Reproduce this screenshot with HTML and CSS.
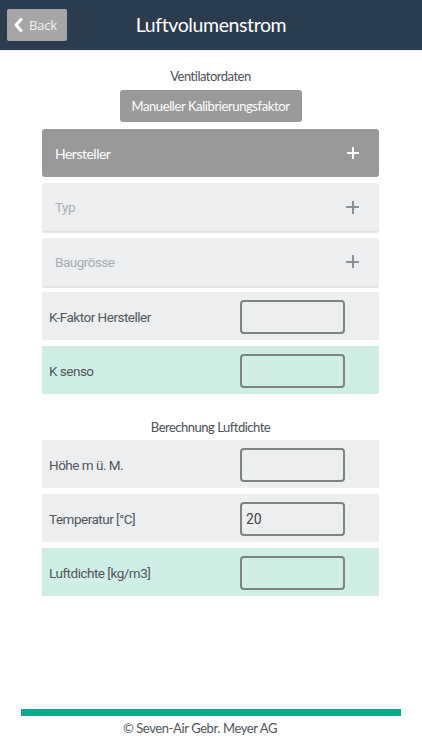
FILE: index.html
```html
<!DOCTYPE html>
<html lang="de">
<head>
<meta charset="utf-8">
<title>Luftvolumenstrom</title>
<link rel="stylesheet" href="styles.css">
</head>
<body>
<div class="page">
  <header class="topbar">
    <button class="back">
      <svg class="chev" width="9" height="14" viewBox="0 0 9 14"><path d="M7 1.5 L2 7 L7 12.5" fill="none" stroke="#ffffff" stroke-width="3" stroke-linecap="round" stroke-linejoin="round"/></svg>
      <span>Back</span>
    </button>
    <h1 class="title">Luftvolumenstrom</h1>
  </header>

  <main class="content">
    <div class="section-title first">Ventilatordaten</div>
    <div class="btn-row"><button class="calib">Manueller Kalibrierungsfaktor</button></div>

    <div class="list">
      <div class="row select active"><span>Hersteller</span><span class="plus"></span></div>
      <div class="row select"><span>Typ</span><span class="plus"></span></div>
      <div class="row select"><span>Baugrösse</span><span class="plus"></span></div>
      <div class="row field"><span>K-Faktor Hersteller</span><div class="input"></div></div>
      <div class="row field result"><span>K senso</span><div class="input"></div></div>
    </div>

    <div class="section-title second">Berechnung Luftdichte</div>
    <div class="list second-list">
      <div class="row field"><span>Höhe m ü. M.</span><div class="input"></div></div>
      <div class="row field"><span>Temperatur [°C]</span><div class="input">20</div></div>
      <div class="row field result"><span>Luftdichte [kg/m3]</span><div class="input"></div></div>
    </div>
  </main>

  <footer class="footer">
    <div class="bar"></div>
    <div class="copy">© Seven-Air Gebr. Meyer AG</div>
  </footer>
</div>
</body>
</html>
```
FILE: styles.css
```css
* { box-sizing: border-box; }
html, body { margin: 0; padding: 0; background: #ffffff; }
body { font-family: Lato, "Open Sans", sans-serif; }
.page { min-height: 750px; display: flex; flex-direction: column; }

.topbar {
  height: 51px;
  background: #2c3c4f;
  border-bottom: 1px solid #e6eef6;
  display: flex;
  align-items: center;
  position: relative;
  padding: 0 7px;
}
.back {
  width: 60px; height: 32px;
  margin-top: -1px;
  background: #a6a6a6;
  border: none;
  border-radius: 2px;
  display: flex; align-items: center;
  padding: 0 0 0 7px;
  gap: 6px;
  color: #f2f2f2;
  font-family: "Open Sans", sans-serif;
  font-size: 13px;
  letter-spacing: -0.2px;
}
.title {
  position: absolute; left: 0; right: 0; top: 0; bottom: 0;
  margin: 0;
  display: flex; align-items: center; justify-content: center;
  font-family: Lato, sans-serif;
  font-weight: 400;
  font-size: 19.5px;
  letter-spacing: -0.4px;
  color: #ffffff;
  pointer-events: none;
  padding-bottom: 2px;
}

.content { padding: 0 43px 0 42px; display: flex; flex-direction: column; }
.section-title {
  text-align: center;
  font-size: 13px;
  font-weight: 400;
  letter-spacing: -0.5px;
  color: #4a5057;
  line-height: 16px;
}
.section-title.first { margin-top: 17px; }
.section-title.second { margin-top: 25px; margin-bottom: 5px; }
.btn-row { display: flex; justify-content: center; margin-top: 6px; margin-bottom: 7px; }
.calib {
  width: 182px; height: 32px;
  background: #9a9a9a;
  border: none; border-radius: 3px;
  color: #ffffff;
  font-family: Lato, sans-serif;
  font-weight: 400;
  font-size: 13px;
  letter-spacing: -0.4px;
  white-space: nowrap;
  padding: 0;
}

.list { display: flex; flex-direction: column; gap: 6.3px; }
.second-list { gap: 6px; }
.row {
  height: 48px;
  flex: none;
  display: flex; align-items: center; justify-content: space-between;
  background: #eceef0;
  font-family: Roboto, "Liberation Sans", sans-serif;
  font-size: 13.5px;
  letter-spacing: -0.5px;
}
.row.select {
  border-radius: 3px;
  padding: 0 20px 0 13px;
  color: #a9adb2;
  box-shadow: 0 1.5px 1px rgba(0,0,0,0.12);
}
.row.select.active {
  background: #999999;
  color: #ffffff;
  font-family: Lato, sans-serif;
  font-size: 14px;
  letter-spacing: -0.5px;
  box-shadow: none;
}
.plus { width: 13px; height: 13px; position: relative; }
.plus::before, .plus::after {
  content: ""; position: absolute; background: #8a9098;
}
.plus::before { left: 0; right: 0; top: 5.5px; height: 2px; }
.plus::after { top: 0; bottom: 0; left: 5.5px; width: 2px; }
.active .plus { width: 12px; height: 12px; }
.active .plus::before { top: 4.75px; height: 2.5px; }
.active .plus::after { left: 4.75px; width: 2.5px; }
.active .plus::before, .active .plus::after { background: #ffffff; }

.row.field { padding: 0 34px 0 7px; color: #50565c; }
.row.field > span { padding-top: 2px; }
.row.result { background: #cfeee6; }
.input {
  width: 105px; height: 34px;
  margin-top: 2px;
  border: 2px solid #7b8383;
  border-radius: 4px;
  padding: 0 4px;
  display: flex; align-items: center;
  font-family: Roboto, "Liberation Sans", sans-serif;
  font-size: 14px;
  letter-spacing: 0;
  color: #3d4348;
}

.footer { margin-top: auto; padding: 0 21px 14px; }
.bar { height: 7px; background: #0aa98b; }
.copy {
  text-align: center;
  font-size: 13px;
  font-weight: 400;
  letter-spacing: -0.4px;
  color: #4f5459;
  margin-top: 4px;
  padding-right: 22px;
  line-height: 16px;
}
```
